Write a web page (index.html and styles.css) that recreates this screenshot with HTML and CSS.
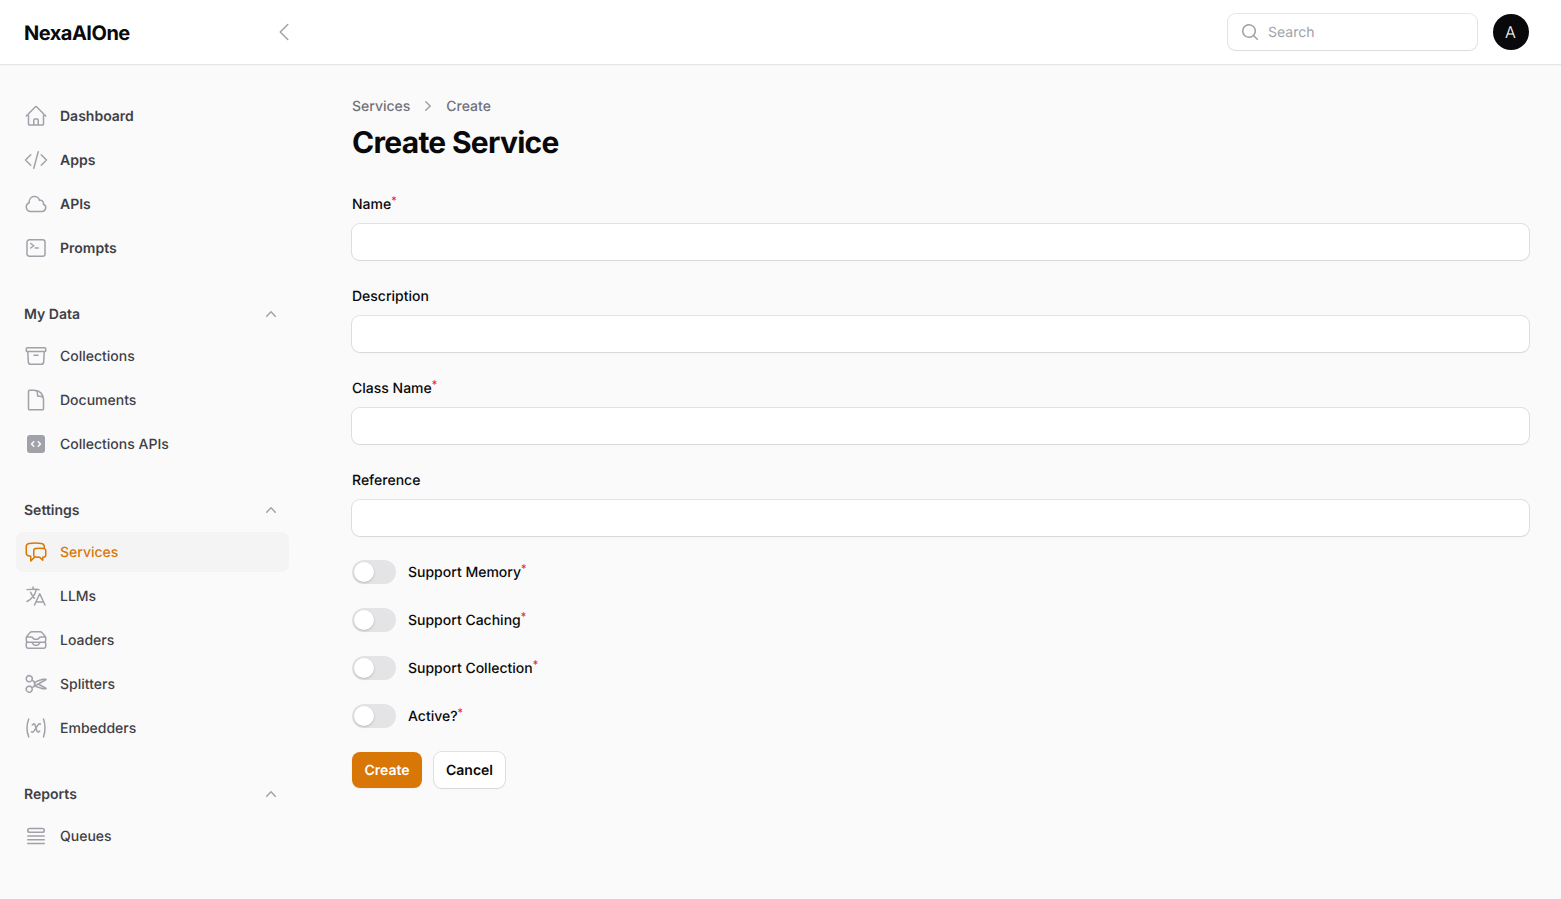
FILE: index.html
```html
<!DOCTYPE html>
<html lang="en">
<head>
<meta charset="utf-8">
<title>Create Service - NexaAIOne</title>
<link rel="stylesheet" href="styles.css">
</head>
<body>
<header class="header">
  <div class="brand">
    <a class="logo">NexaAIOne</a>
    <svg class="icon" viewBox="0 0 24 24"><path d="M15.75 19.5L8.25 12l7.5-7.5"/></svg>
  </div>
  <div class="topbar">
    <div class="search">
      <svg class="icon icon-sm" viewBox="0 0 20 20"><path class="solid" fill-rule="evenodd" d="M9 3.5a5.5 5.5 0 100 11 5.5 5.5 0 000-11zM2 9a7 7 0 1112.452 4.391l3.328 3.329a.75.75 0 11-1.06 1.06l-3.329-3.328A7 7 0 012 9z" clip-rule="evenodd"/></svg>
      <span class="placeholder">Search</span>
    </div>
    <div class="avatar">A</div>
  </div>
</header>
<div class="layout">
  <nav class="sidebar">
    <ul class="items strong">
      <li class="item"><svg class="icon" viewBox="0 0 24 24"><path d="M2.25 12l8.954-8.955c.44-.439 1.152-.439 1.591 0L21.75 12M4.5 9.75v10.125c0 .621.504 1.125 1.125 1.125H9.75v-4.875c0-.621.504-1.125 1.125-1.125h2.25c.621 0 1.125.504 1.125 1.125V21h4.125c.621 0 1.125-.504 1.125-1.125V9.75M8.25 21h8.25"/></svg><span>Dashboard</span></li>
      <li class="item"><svg class="icon" viewBox="0 0 24 24"><path d="M17.25 6.75L22.5 12l-5.25 5.25m-10.5 0L1.5 12l5.25-5.25m7.5-3l-4.5 16.5"/></svg><span>Apps</span></li>
      <li class="item"><svg class="icon" viewBox="0 0 24 24"><path d="M2.25 15a4.5 4.5 0 004.5 4.5H18a3.75 3.75 0 001.332-7.257 3 3 0 00-3.758-3.848 5.25 5.25 0 00-10.233 2.33A4.502 4.502 0 002.25 15z"/></svg><span>APIs</span></li>
      <li class="item"><svg class="icon" viewBox="0 0 24 24"><path d="M6.75 7.5l3 2.25-3 2.25m4.5 0h3m-9 8.25h13.5A2.25 2.25 0 0021 18V6a2.25 2.25 0 00-2.25-2.25H5.25A2.25 2.25 0 003 6v12a2.25 2.25 0 002.25 2.25z"/></svg><span>Prompts</span></li>
    </ul>
    <section class="group">
      <div class="group-head"><span>My Data</span><svg class="icon icon-sm" viewBox="0 0 20 20"><path class="solid" fill-rule="evenodd" d="M14.77 12.79a.75.75 0 01-1.06-.02L10 8.832 6.29 12.77a.75.75 0 11-1.08-1.04l4.25-4.5a.75.75 0 011.08 0l4.25 4.5a.75.75 0 01-.02 1.06z" clip-rule="evenodd"/></svg></div>
      <ul class="items">
        <li class="item"><svg class="icon" viewBox="0 0 24 24"><path d="M20.25 7.5l-.625 10.632a2.25 2.25 0 01-2.247 2.118H6.622a2.25 2.25 0 01-2.247-2.118L3.75 7.5M10 11.25h4M3.375 7.5h17.25c.621 0 1.125-.504 1.125-1.125v-1.5c0-.621-.504-1.125-1.125-1.125H3.375c-.621 0-1.125.504-1.125 1.125v1.5c0 .621.504 1.125 1.125 1.125z"/></svg><span>Collections</span></li>
        <li class="item"><svg class="icon" viewBox="0 0 24 24"><path d="M19.5 14.25v-2.625a3.375 3.375 0 00-3.375-3.375h-1.5A1.125 1.125 0 0113.5 7.125v-1.5a3.375 3.375 0 00-3.375-3.375H8.25m2.25 0H5.625c-.621 0-1.125.504-1.125 1.125v17.25c0 .621.504 1.125 1.125 1.125h12.75c.621 0 1.125-.504 1.125-1.125V11.25a9 9 0 00-9-9z"/></svg><span>Documents</span></li>
        <li class="item"><svg class="icon" viewBox="0 0 24 24"><path class="solid" fill-rule="evenodd" d="M3 6a3 3 0 013-3h12a3 3 0 013 3v12a3 3 0 01-3 3H6a3 3 0 01-3-3V6zm14.25 6a.75.75 0 01-.22.53l-2.25 2.25a.75.75 0 11-1.06-1.06L15.44 12l-1.72-1.72a.75.75 0 111.06-1.06l2.25 2.25c.141.14.22.331.22.53zm-10.28-.53a.75.75 0 000 1.06l2.25 2.25a.75.75 0 101.06-1.06L8.56 12l1.72-1.72a.75.75 0 10-1.06-1.06l-2.25 2.25z" clip-rule="evenodd"/></svg><span>Collections APIs</span></li>
      </ul>
    </section>
    <section class="group">
      <div class="group-head"><span>Settings</span><svg class="icon icon-sm" viewBox="0 0 20 20"><path class="solid" fill-rule="evenodd" d="M14.77 12.79a.75.75 0 01-1.06-.02L10 8.832 6.29 12.77a.75.75 0 11-1.08-1.04l4.25-4.5a.75.75 0 011.08 0l4.25 4.5a.75.75 0 01-.02 1.06z" clip-rule="evenodd"/></svg></div>
      <ul class="items">
        <li class="item active"><svg class="icon" viewBox="0 0 24 24"><path d="M20.25 8.511c.884.284 1.5 1.128 1.5 2.097v4.286c0 1.136-.847 2.1-1.98 2.193-.34.027-.68.052-1.02.072v3.091l-3-3c-1.354 0-2.694-.055-4.02-.163a2.115 2.115 0 01-.825-.242m9.345-8.334a2.126 2.126 0 00-.476-.095 48.64 48.64 0 00-8.048 0c-1.131.094-1.976 1.057-1.976 2.192v4.286c0 .837.46 1.58 1.155 1.951m9.345-8.334V6.637c0-1.621-1.152-3.026-2.76-3.235A48.455 48.455 0 0011.25 3c-2.115 0-4.198.137-6.24.402-1.608.209-2.76 1.614-2.76 3.235v6.226c0 1.621 1.152 3.026 2.76 3.235.577.075 1.157.14 1.74.194V21l4.155-4.155"/></svg><span>Services</span></li>
        <li class="item"><svg class="icon" viewBox="0 0 24 24"><path d="M10.5 21l5.25-11.25L21 21m-9-3h7.5M3 5.621a48.474 48.474 0 016-.371m0 0c1.12 0 2.233.038 3.334.114M9 5.25V3m3.334 2.364C11.176 10.658 7.69 15.08 3 17.502m9.334-12.138c.896.061 1.785.147 2.666.257m-4.589 8.495a18.023 18.023 0 01-3.827-5.802"/></svg><span>LLMs</span></li>
        <li class="item"><svg class="icon" viewBox="0 0 24 24"><path d="M7.875 14.25l1.214 1.942a2.25 2.25 0 001.908 1.058h2.006c.776 0 1.497-.4 1.908-1.058l1.214-1.942M2.41 9h4.636a2.25 2.25 0 011.872 1.002l.164.246a2.25 2.25 0 001.872 1.002h2.092a2.25 2.25 0 001.872-1.002l.164-.246A2.25 2.25 0 0116.954 9h4.636M2.41 9a2.25 2.25 0 00-.16.832V12a2.25 2.25 0 002.25 2.25h15A2.25 2.25 0 0021.75 12V9.832c0-.287-.055-.57-.16-.832M2.41 9a2.25 2.25 0 01.382-.632l3.285-3.832a2.25 2.25 0 011.708-.786h8.43c.657 0 1.281.287 1.709.786l3.284 3.832c.163.19.291.404.382.632M4.5 20.25h15A2.25 2.25 0 0021.75 18v-2.625c0-.621-.504-1.125-1.125-1.125H3.375c-.621 0-1.125.504-1.125 1.125V18a2.25 2.25 0 002.25 2.25z"/></svg><span>Loaders</span></li>
        <li class="item"><svg class="icon" viewBox="0 0 24 24"><path d="M7.848 8.25l1.536.887M7.848 8.25a3 3 0 11-5.196-3 3 3 0 015.196 3zm1.536.887a2.165 2.165 0 011.083 1.839c.005.351.054.695.14 1.024M9.384 9.137l2.077 1.199M7.848 15.75l1.536-.887m-1.536.887a3 3 0 11-5.196 3 3 3 0 015.196-3zm1.536-.887a2.165 2.165 0 001.083-1.838c.005-.352.054-.695.14-1.025m-1.223 2.863l2.077-1.199m0-3.328a4.323 4.323 0 012.068-1.379l5.325-1.628a4.5 4.5 0 012.48-.044l.803.215-7.794 4.5m-2.882-1.664A4.331 4.331 0 0010.607 12m3.736 0l7.794 4.5-.802.215a4.5 4.5 0 01-2.48-.043l-5.326-1.629a4.324 4.324 0 01-2.068-1.379M14.343 12l-2.882 1.664"/></svg><span>Splitters</span></li>
        <li class="item"><svg class="icon" viewBox="0 0 24 24"><path d="M4.745 3A23.933 23.933 0 003 12c0 3.183.62 6.22 1.745 9M19.5 3c.967 2.78 1.5 5.817 1.5 9s-.533 6.22-1.5 9M8.25 8.885l1.444-.89a.75.75 0 011.105.402l2.402 7.206a.75.75 0 001.104.401l1.445-.889m-8.25.75l.213.09a1.687 1.687 0 002.062-.617l4.45-6.676a1.688 1.688 0 012.062-.618l.213.09"/></svg><span>Embedders</span></li>
      </ul>
    </section>
    <section class="group">
      <div class="group-head"><span>Reports</span><svg class="icon icon-sm" viewBox="0 0 20 20"><path class="solid" fill-rule="evenodd" d="M14.77 12.79a.75.75 0 01-1.06-.02L10 8.832 6.29 12.77a.75.75 0 11-1.08-1.04l4.25-4.5a.75.75 0 011.08 0l4.25 4.5a.75.75 0 01-.02 1.06z" clip-rule="evenodd"/></svg></div>
      <ul class="items">
        <li class="item"><svg class="icon" viewBox="0 0 24 24"><path d="M3.75 12h16.5m-16.5 3.75h16.5M3.75 19.5h16.5M5.625 4.5h12.75a1.875 1.875 0 010 3.75H5.625a1.875 1.875 0 010-3.75z"/></svg><span>Queues</span></li>
      </ul>
    </section>
  </nav>
  <main class="main">
    <div class="crumbs">
      <span>Services</span>
      <svg class="icon icon-sm" viewBox="0 0 20 20"><path class="solid" fill-rule="evenodd" d="M7.21 14.77a.75.75 0 01.02-1.06L11.168 10 7.23 6.29a.75.75 0 111.04-1.08l4.5 4.25a.75.75 0 010 1.08l-4.5 4.25a.75.75 0 01-1.06-.02z" clip-rule="evenodd"/></svg>
      <span>Create</span>
    </div>
    <h1 class="title">Create Service</h1>
    <form class="form">
      <div class="field"><label class="label" for="name">Name<sup class="req">*</sup></label><input class="input" id="name"></div>
      <div class="field"><label class="label" for="desc">Description</label><input class="input" id="desc"></div>
      <div class="field"><label class="label" for="class">Class Name<sup class="req">*</sup></label><input class="input" id="class"></div>
      <div class="field"><label class="label" for="ref">Reference</label><input class="input" id="ref"></div>
      <div class="toggle-row"><span class="toggle"><span class="knob"></span></span><span class="label">Support Memory<sup class="req">*</sup></span></div>
      <div class="toggle-row"><span class="toggle"><span class="knob"></span></span><span class="label">Support Caching<sup class="req">*</sup></span></div>
      <div class="toggle-row"><span class="toggle"><span class="knob"></span></span><span class="label">Support Collection<sup class="req">*</sup></span></div>
      <div class="toggle-row"><span class="toggle"><span class="knob"></span></span><span class="label">Active?<sup class="req">*</sup></span></div>
      <div class="actions"><button class="btn primary" type="button">Create</button><button class="btn" type="button">Cancel</button></div>
    </form>
  </main>
</div>
</body>
</html>
```
FILE: styles.css
```css
* { box-sizing: border-box; }
body {
  margin: 0;
  min-height: 899px;
  background: #fafafa;
  color: #09090b;
  font: 14px/20px Inter, sans-serif;
  text-rendering: geometricPrecision;
}
ul { list-style: none; margin: 0; padding: 0; }

.icon {
  flex: none;
  width: 24px;
  height: 24px;
  fill: none;
  stroke: #a1a1aa;
  stroke-width: 1.5;
  stroke-linecap: round;
  stroke-linejoin: round;
}
.icon-sm { width: 20px; height: 20px; }
.icon .solid { fill: #a1a1aa; stroke: none; }

.header {
  display: flex;
  height: 64px;
  background: #fff;
  box-shadow: 0 0 0 1px rgba(9, 9, 11, .05), 0 1px 2px rgba(0, 0, 0, .05);
}
.brand {
  display: flex;
  align-items: center;
  justify-content: space-between;
  width: 320px;
  padding: 0 24px;
}
.logo { font-size: 20px; line-height: 28px; font-weight: 700; letter-spacing: -.5px; padding-top: 1px; }
.topbar {
  display: flex;
  flex: 1;
  align-items: center;
  justify-content: flex-end;
  gap: 16px;
  padding: 0 32px;
}
.search {
  display: flex;
  align-items: center;
  gap: 8px;
  width: 249px;
  height: 36px;
  padding-left: 12px;
  border-radius: 8px;
  background: #fff;
  box-shadow: 0 0 0 1px rgba(9, 9, 11, .1), 0 1px 2px rgba(0, 0, 0, .05);
}
.placeholder { padding-top: 2px; color: #a1a1aa; }
.avatar {
  display: flex;
  align-items: center;
  justify-content: center;
  width: 36px;
  height: 36px;
  border-radius: 50%;
  background: #09090b;
  color: #fff;
  font-size: 16px;
  font-weight: 300;
  padding: 0 1px 1px 0;
}

.layout { display: flex; }
.sidebar {
  display: flex;
  flex-direction: column;
  gap: 28px;
  width: 320px;
  padding: 32px 31px 32px 16px;
}
.items, .group { display: flex; flex-direction: column; gap: 4px; }
.item {
  display: flex;
  align-items: center;
  gap: 12px;
  height: 40px;
  padding: 0 8px;
  border-radius: 8px;
  color: #3f3f46;
  font-weight: 500;
}
.item span, .group-head span { padding-top: 2px; }
.strong .item { font-weight: 600; }
.item.active { background: #f4f4f5; color: #d97706; }
.active .icon { stroke: #d97706; }
.group-head {
  display: flex;
  align-items: center;
  justify-content: space-between;
  height: 36px;
  padding: 0 8px;
  color: #3f3f46;
  font-weight: 600;
}

.main { flex: 1; padding: 32px; }
.crumbs { display: flex; align-items: center; gap: 8px; height: 20px; color: #71717a; font-weight: 500; }
.crumbs span { padding-top: 2px; }
.title { margin: 8px 0 32px; padding-top: 2px; font-size: 30px; line-height: 34px; font-weight: 700; letter-spacing: -.72px; }
.form { display: flex; flex-direction: column; gap: 24px; }
.field { display: flex; flex-direction: column; gap: 8px; }
.label { padding-top: 2px; font-weight: 500; line-height: 22px; }
.req { font-size: 75%; line-height: 0; position: relative; top: -.5em; vertical-align: baseline; color: #dc2626; }
.input {
  width: 100%;
  height: 36px;
  padding: 6px 12px;
  border: 0;
  border-radius: 8px;
  background: #fff;
  box-shadow: 0 0 0 1px rgba(9, 9, 11, .1), 0 1px 2px rgba(0, 0, 0, .05);
}
.toggle-row { display: flex; align-items: center; gap: 12px; height: 24px; }
.toggle { width: 44px; height: 24px; padding: 2px; border-radius: 12px; background: #e4e4e7; }
.knob {
  display: block;
  width: 20px;
  height: 20px;
  border-radius: 50%;
  background: #fff;
  box-shadow: 0 1px 3px rgba(0, 0, 0, .1), 0 1px 2px rgba(0, 0, 0, .1);
}
.actions { display: flex; gap: 12px; }
.btn {
  width: 71px;
  height: 36px;
  padding: 0;
  border: 0;
  border-radius: 8px;
  background: #fff;
  color: #09090b;
  font: 600 14px/20px Inter, sans-serif;
  text-rendering: geometricPrecision;
  padding-top: 1px;
  box-shadow: 0 0 0 1px rgba(9, 9, 11, .1), 0 1px 2px rgba(0, 0, 0, .05);
}
.btn.primary { width: 70px; background: #d97706; color: #fff; box-shadow: 0 1px 2px rgba(0, 0, 0, .05); }
```
